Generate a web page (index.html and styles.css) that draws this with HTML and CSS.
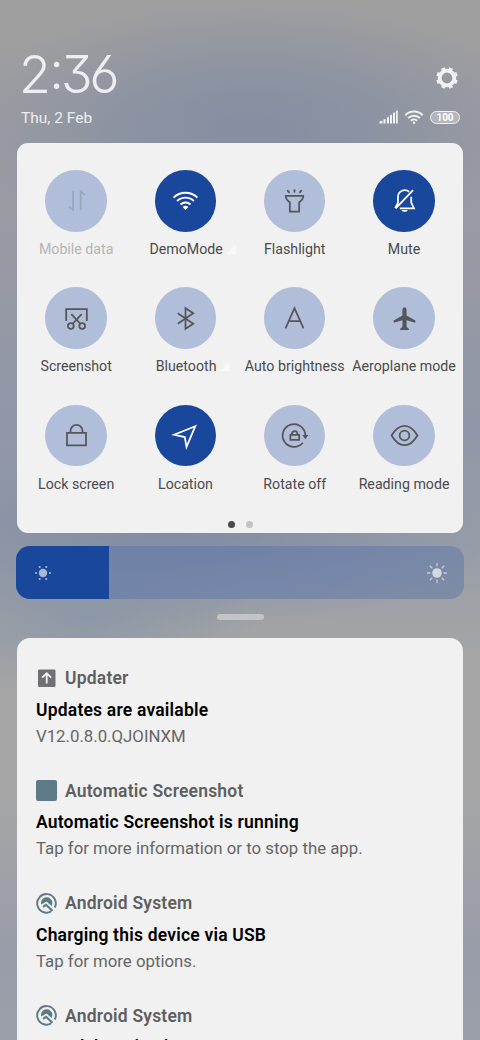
FILE: index.html
```html
<!DOCTYPE html>
<html lang="en">
<head>
<meta charset="utf-8">
<title>Control centre</title>
<link rel="stylesheet" href="styles.css">
</head>
<body>
<main class="shade">
  <header class="status">
    <div class="status-left">
      <div class="clock"><span class="hour">2</span><span class="colon">:</span><span>3</span><span>6</span></div>
      <div class="date">Thu, 2 Feb</div>
    </div>
    <div class="status-right">
      <svg class="gear" viewBox="0 0 24 24" width="24" height="24"><circle cx="12" cy="12" r="7.300" fill="none" stroke="#f1f2f4" stroke-width="3.800"/><path stroke="#f1f2f4" stroke-width="4" d="M19.400 15.100l2.600 1M15.100 19.400l1 2.600M8.900 19.400l-1 2.600M4.600 15.100l-2.600 1M4.600 8.900 2 7.900M8.900 4.600 7.900 2M15.100 4.600l1-2.600M19.400 8.900l2.600-1"/></svg>
      <div class="indicators">
        <svg viewBox="0 0 19 14" width="19" height="14"><path fill="#f1f2f4" d="M.5 11.500 3.500 10.500V13.500H.5zM4.500 9.500l2-.8v4.800h-2zM8 7.500l2-.8v6.800H8zM11 5.300l2-.8v9h-2zM14 3l2-.8v11.300h-2zM17 .9 18.700.3v13.200H17z"/></svg>
        <svg viewBox="0 0 20 14" width="20" height="14" fill="none" stroke="#f1f2f4" stroke-width="2"><path d="M1.300 5.200a12.300 12.300 0 0 1 17.400 0M4.100 8.100a8.300 8.300 0 0 1 11.800 0M6.900 10.800a4.400 4.400 0 0 1 6.200 0"/><circle cx="10" cy="12.700" r="1.200" fill="#f1f2f4" stroke="none"/></svg>
        <span class="battery">100</span>
      </div>
    </div>
  </header>

  <section class="panel">
    <div class="tiles">
      <div class="tile disabled"><div class="disc"><svg viewBox="0 0 30 30"><path d="M11.700 5.500v18.500L7.500 21M19 24.500V6l4 3.500"/></svg></div><span>Mobile data</span></div>
      <div class="tile on"><div class="disc"><svg viewBox="0 0 30 30"><path stroke-width="1.900" d="M3.500 12.200a16.500 16.500 0 0 1 23 0M6.900 15.500a11.600 11.600 0 0 1 16.200 0M10.200 18.800a6.900 6.900 0 0 1 9.600 0"/><path class="solid" d="M12.300 21.400a3.600 3.600 0 0 1 5.400 0L15 24.200z"/></svg></div><span class="net">DemoMode</span></div>
      <div class="tile"><div class="disc"><svg viewBox="0 0 30 30"><path d="M6.500 10.500h17q-.1 3.800-4 6.300v9h-9v-9q-3.900-2.500-4-6.300zM15 4v3.300M8 5l2.200 2.600M22 5l-2.200 2.600"/></svg></div><span>Flashlight</span></div>
      <div class="tile on"><div class="disc"><svg viewBox="0 0 30 30"><path d="M19.500 6.500A6.600 6.600 0 0 0 8.700 11.500V17L6 22.500M23.300 5 6.500 22.700M10.500 22.600h13.700L21.500 17v-5.700"/><path class="solid" d="M12 24.200h6.200a3.200 2.400 0 0 1-6.200 0z"/></svg></div><span>Mute</span></div>
      <div class="tile"><div class="disc"><svg viewBox="0 0 30 30"><path d="M5 17.500V6h20v11.500M10 10.800l8.700 9.300M20 10.800l-8.700 9.300"/><circle cx="9.500" cy="22.300" r="2.800"/><circle cx="20.500" cy="22.300" r="2.800"/></svg></div><span>Screenshot</span></div>
      <div class="tile"><div class="disc"><svg viewBox="0 0 30 30"><path d="M7.500 10l15 10-7.500 5V5l7.500 5-15 10"/></svg></div><span class="net">Bluetooth</span></div>
      <div class="tile"><div class="disc"><svg viewBox="0 0 30 30"><path d="M6.300 24.500 15 5l8.700 19.500M9.500 17.500h11"/></svg></div><span>Auto brightness</span></div>
      <div class="tile"><div class="disc"><svg viewBox="0 0 30 30"><path class="solid" d="M15 4q2 0 2 2.500v5.500l8.500 5v2L17 16.700v6.300l2.200 2v1.200h-8.400V25l2.200-2v-6.300l-8.500 2.300v-2l8.500-5v-5.500Q13 4 15 4z"/></svg></div><span>Aeroplane mode</span></div>
      <div class="tile"><div class="disc"><svg viewBox="0 0 30 30"><path d="M5.800 12.500h18.400v12H5.800zM9.200 12.500V10.500a5.800 5.800 0 0 1 11.600 0v2"/></svg></div><span>Lock screen</span></div>
      <div class="tile on"><div class="disc"><svg viewBox="0 0 30 30"><path d="M24.500 6 4 14.300l10.300 2.200L16 26z"/></svg></div><span>Location</span></div>
      <div class="tile"><div class="disc"><svg viewBox="0 0 30 30"><path d="M23 22A11 11 0 1 1 25.500 15v1.500"/><path class="solid" d="M22.500 14.500h6L25.500 18.700z"/><path d="M11 14.500h8.500v4.700H11zM12.600 14.500v-1.200a2.600 2.600 0 0 1 5.200 0v1.200"/></svg></div><span>Rotate off</span></div>
      <div class="tile"><div class="disc"><svg viewBox="0 0 30 30"><path d="M2.500 15Q8 5.600 15 5.600T27.500 15Q22 24.400 15 24.400T2.500 15z"/><circle cx="15" cy="15" r="4.700"/></svg></div><span>Reading mode</span></div>
    </div>
    <div class="pages"><i class="current"></i><i></i></div>
  </section>

  <div class="brightness">
    <div class="level"><svg viewBox="0 0 18 18" width="18" height="18" fill="#a9b8d8"><circle cx="9" cy="9" r="4.200"/><circle cx="2" cy="9" r="1.100"/><circle cx="16" cy="9" r="1.100"/><circle cx="5.700" cy="3" r="1.100"/><circle cx="12.300" cy="3" r="1.100"/><circle cx="5.700" cy="15" r="1.100"/><circle cx="12.300" cy="15" r="1.100"/></svg></div>
    <svg viewBox="0 0 22 22" width="22" height="22"><circle cx="11" cy="11" r="4.800" fill="#d3d8e1"/><path stroke="#c8cfdb" stroke-width="1.300" stroke-linecap="round" d="M11 1.500v2.300M11 18.200v2.300M1.500 11h2.300M18.200 11h2.300M4.300 4.300l1.500 1.500M16.200 16.200l1.500 1.500M17.700 4.300l-1.500 1.500M5.800 16.200l-1.500 1.500"/></svg>
  </div>
  <div class="handle"></div>

  <section class="notices">
    <article>
      <h2><svg viewBox="0 0 21 21" width="21" height="21"><rect x="2" y="1.500" width="17.500" height="17.500" rx="1.200" fill="#707072"/><path d="M10.700 15.500V5.500M6.200 9.700l4.500-4.500 4.500 4.500" fill="none" stroke="#f1f1f1" stroke-width="1.800"/></svg>Updater</h2>
      <h3>Updates are available</h3>
      <p>V12.0.8.0.QJOINXM</p>
    </article>
    <article>
      <h2><svg viewBox="0 0 21 21" width="21" height="21"><rect width="21" height="21" rx="2" fill="#5c7b87"/></svg>Automatic Screenshot</h2>
      <h3>Automatic Screenshot is running</h3>
      <p>Tap for more information or to stop the app.</p>
    </article>
    <article>
      <h2><svg viewBox="0 0 21 21" width="21" height="21" fill="none"><path d="M15.300 18.300A9.300 9.300 0 1 1 18.800 14.500" stroke="#5c7b87" stroke-width="1.900"/><path d="M5.200 11.500A5.700 5.700 0 1 1 15.500 13L10.500 8.500z" fill="#5c7b87"/><path d="M7 13.800 10 11.800l6.500 6" stroke="#5c7b87" stroke-width="2.200"/></svg>Android System</h2>
      <h3>Charging this device via USB</h3>
      <p>Tap for more options.</p>
    </article>
    <article>
      <h2><svg viewBox="0 0 21 21" width="21" height="21" fill="none"><path d="M15.300 18.300A9.300 9.300 0 1 1 18.800 14.500" stroke="#5c7b87" stroke-width="1.900"/><path d="M5.200 11.500A5.700 5.700 0 1 1 15.500 13L10.500 8.500z" fill="#5c7b87"/><path d="M7 13.800 10 11.800l6.500 6" stroke="#5c7b87" stroke-width="2.200"/></svg>Android System</h2>
      <h3>USB debugging is on</h3>
    </article>
  </section>
</main>
</body>
</html>
```
FILE: styles.css
```css
* { box-sizing: border-box; }
body { margin: 0; overflow: hidden; }
svg { display: block; flex: none; }

.shade {
  width: 480px;
  height: 1040px;
  overflow: hidden;
  display: flex;
  flex-direction: column;
  font-family: Roboto, sans-serif;
  background:
    radial-gradient(ellipse 290px 130px at 250px 130px, rgba(130, 141, 162, .9) 0%, rgba(130, 141, 162, .6) 45%, rgba(130, 141, 162, 0) 100%),
    radial-gradient(ellipse 340px 100px at 170px 530px, rgba(124, 137, 163, .85) 0%, rgba(124, 137, 163, 0) 100%),
    radial-gradient(ellipse 170px 80px at 85px 620px, rgba(137, 150, 167, .8) 0%, rgba(137, 150, 167, 0) 100%),
    linear-gradient(#a09f9f 0, #9b9ca1 150px, #9197a8 430px, #9a9fa7 560px, #a5a5a5 660px, #a6a6a6 790px, #999da9 950px, #9b9fa9 1040px);
}
.shade > * { flex: none; }

.status { height: 143px; display: flex; justify-content: space-between; padding: 45px 20px 0 21px; color: #eceef2; }
.clock { height: 60px; line-height: 60px; font-family: Inter, sans-serif; font-weight: 275; font-size: 52px; font-feature-settings: "cv09", "cv03"; display: flex; letter-spacing: -3.100px; }
.hour { margin: 0 1.500px 0 -2px; }
.colon { transform: translateY(-4px); }
.date { height: 26px; line-height: 26px; font-size: 15.500px; }
.status-right { display: flex; flex-direction: column; align-items: flex-end; padding-top: 21px; }
.gear { margin-right: 1.500px; }
.indicators { display: flex; align-items: center; gap: 6px; margin-top: 20px; }
.battery { width: 30px; height: 13px; border: 1.500px solid #f1f2f4; border-radius: 7px; background: rgba(255, 255, 255, .3); font-size: 10px; line-height: 11px; font-weight: 700; text-align: center; color: #fff; }

.panel { margin: 0 17px; height: 389.500px; border-radius: 11px; background: #f1f1f1; padding: 27px 4px 0 4.500px; display: flex; flex-direction: column; }
.tiles { display: grid; grid-template-columns: repeat(4, 109.300px); grid-auto-rows: 117.300px; }
.tile { display: flex; flex-direction: column; align-items: center; color: #4b4b4b; font-size: 14.200px; white-space: nowrap; }
.tile > span { margin-top: 6.500px; line-height: 22px; position: relative; }
.disc { width: 61.500px; height: 61.500px; border-radius: 50%; background: #b0bed9; display: grid; place-items: center; }
.disc svg { width: 31px; height: 31px; fill: none; stroke: #555657; stroke-width: 1.700; }
.disc .solid { fill: #555657; stroke: none; }
.on .disc { background: #19479c; }
.on .disc svg { stroke: #fff; }
.on .disc .solid { fill: #fff; }
.disabled { color: #b5b5b5; }
.disabled .disc svg { stroke: #99a6bc; }
.tile > .net { left: .7px; }
.net::after { content: ""; position: absolute; left: calc(100% + 4px); top: 6px; width: 9px; height: 10px; background: #f9f9f9; clip-path: polygon(100% 0, 100% 100%, 0 100%); }
.pages { display: flex; justify-content: center; gap: 11px; margin-top: -1px; }
.pages i { width: 7px; height: 7px; border-radius: 50%; background: #c3c3c3; }
.pages .current { background: #494949; }

.brightness { margin: 13.500px 16px 0; height: 53px; border-radius: 14px; overflow: hidden; background: rgba(80, 110, 170, .42); display: flex; align-items: center; justify-content: space-between; padding-right: 16px; }
.level { width: 93px; height: 100%; background: #19479c; display: flex; align-items: center; padding-left: 18px; }
.handle { width: 47px; height: 6px; border-radius: 3px; background: #c3c4c8; margin: 15px auto 18px; }

.notices { margin: 0 17px; height: 420px; border-radius: 13px 13px 0 0; background: #f1f1f1; padding: 27px 19px 0; display: flex; flex-direction: column; gap: 29px; overflow: hidden; }
h2, h3, p { margin: 0; font-size: 17.500px; white-space: nowrap; }
h2 { display: flex; align-items: center; gap: 8px; height: 26px; font-weight: 600; letter-spacing: .2px; color: #5f5f5f; margin-bottom: 5.500px; }
h3 { line-height: 27px; font-weight: 600; letter-spacing: .2px; color: #000; }
p { line-height: 25px; font-size: 16.800px; color: #666; }
```
